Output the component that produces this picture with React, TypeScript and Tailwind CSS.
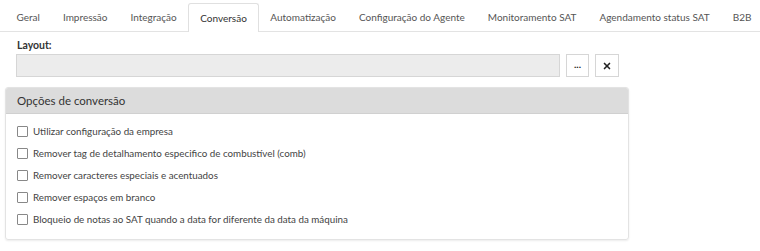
import { X } from 'lucide-react'

const tabs = [
  'Geral',
  'Impressão',
  'Integração',
  'Conversão',
  'Automatização',
  'Configuração do Agente',
  'Monitoramento SAT',
  'Agendamento status SAT',
  'B2B',
]

const options = [
  'Utilizar configuração da empresa',
  'Remover tag de detalhamento especifico de combustível (comb)',
  'Remover caracteres especiais e acentuados',
  'Remover espaços em branco',
  'Bloqueio de notas ao SAT quando a data for diferente da data da máquina',
]

export default function App() {
  return (
    <div
      className="w-[760px] h-[251px] bg-white text-[#333] overflow-hidden"
      style={{ fontFamily: 'Lato, "Noto Sans", sans-serif' }}
    >
      {/* Tabs */}
      <div className="flex items-end h-[32px] pt-[3px] pl-[5px] border-b border-[#e3e3e3] text-[10px]">
        {tabs.map((t) => (
          <div
            key={t}
            className={
              t === 'Conversão'
                ? 'h-[29px] px-[11px] flex items-center shrink-0 bg-white border border-b-0 border-[#e0e0e0] rounded-t-[3px] -mb-px text-[#333]'
                : 'h-[28px] px-[11.5px] flex items-center shrink-0 text-[#555]'
            }
          >
            {t}
          </div>
        ))}
      </div>

      {/* Layout field */}
      <div className="pl-[16px] pt-[6px]">
        <div className="text-[10.5px] font-bold text-[#333] leading-[14px] ml-px">Layout:</div>
        <div className="flex items-center gap-[6px] mt-[2px]">
          <div className="w-[544px] h-[23px] bg-[#ececec] border border-[#d6d6d6]" />
          <button className="w-[23px] h-[23px] border border-[#d6d6d6] bg-white flex items-center justify-center text-[#222] text-[10px] font-bold leading-none pb-[3px]">
            ...
          </button>
          <button className="w-[24px] h-[23px] border border-[#d6d6d6] bg-white flex items-center justify-center text-[#222]">
            <X size={10} strokeWidth={4} />
          </button>
        </div>
      </div>

      {/* Panel */}
      <div className="ml-[5px] mt-[10px] w-[624px] h-[153px] border border-[#e3e3e3] rounded-[3px] shadow-[0_1px_2px_rgba(0,0,0,0.08)] overflow-hidden">
        <div className="h-[26px] bg-[#dcdcdc] border-b border-[#d0d0d0] flex items-center pl-[11px] text-[11.5px] text-[#333]">
          Opções de conversão
        </div>
        <div className="pt-[10px] pl-[11px] flex flex-col gap-[8px]">
          {options.map((o) => (
            <label key={o} className="flex items-center h-[14px] text-[9.8px] text-[#444]">
              <span className="w-[11px] h-[11px] border border-[#888] rounded-[1px] bg-white mr-[5px] shrink-0" />
              {o}
            </label>
          ))}
        </div>
      </div>
    </div>
  )
}
